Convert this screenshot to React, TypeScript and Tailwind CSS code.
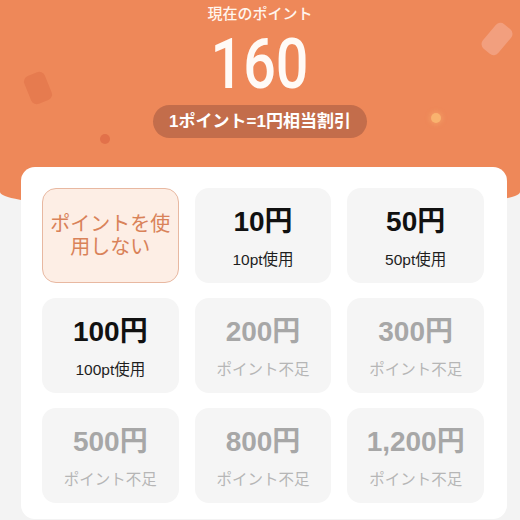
import React from "react";

type Opt = { title: string; sub: string; ok: boolean };

const opts: Opt[] = [
  { title: "10円", sub: "10pt使用", ok: true },
  { title: "50円", sub: "50pt使用", ok: true },
  { title: "100円", sub: "100pt使用", ok: true },
  { title: "200円", sub: "ポイント不足", ok: false },
  { title: "300円", sub: "ポイント不足", ok: false },
  { title: "500円", sub: "ポイント不足", ok: false },
  { title: "800円", sub: "ポイント不足", ok: false },
  { title: "1,200円", sub: "ポイント不足", ok: false },
];

export default function App() {
  return (
    <div
      className="relative h-[520px] w-[520px] overflow-hidden bg-[#f3f3f3]"
      style={{ fontFamily: '"Liberation Sans", "Noto Sans CJK JP", sans-serif' }}
    >
      <div className="relative h-[212px] w-full rounded-b-[50%_20px] bg-[#ee8859]">
        <div className="absolute left-[27px] top-[73px] h-[30px] w-[22px] -rotate-[22deg] rounded-[6px] bg-[#e67b4f]" />
        <div className="absolute left-[487px] top-[23px] h-[32px] w-[20px] rotate-[40deg] rounded-[6px] bg-[#f29f7e]" />
        <div className="absolute left-[100px] top-[134px] h-[10px] w-[10px] rounded-full bg-[#e2714a]" />
        <div className="absolute left-[431px] top-[113px] h-[10px] w-[10px] rounded-full bg-[#f9b36f] shadow-[0_0_4px_2px_rgba(249,179,111,0.35)]" />
        <div className="relative flex flex-col items-center">
          <div className="mt-[3px] h-[21px] text-[15px] font-medium leading-[21px] text-[#fff5ee]">
            現在のポイント
          </div>
          <div
            className="mt-[4px] h-[71px] scale-x-[0.81] text-[71px] font-medium leading-[71px] text-[#fffaf6]"
            style={{ fontFamily: 'Roboto, "Liberation Sans", sans-serif' }}
          >
            160
          </div>
          <div className="mt-[6px] flex h-[33px] items-center rounded-full bg-[#c36d4b] px-[16px] text-[17px] font-bold text-white">
            1ポイント=1円相当割引
          </div>
        </div>
      </div>
      <div className="relative z-10 -mt-[45px] ml-[21px] w-[486px] rounded-[14px] bg-white px-[21px] pb-[16px] pt-[21px]">
        <div className="grid w-[442px] grid-cols-3 gap-x-[16px] gap-y-[15px]">
          <div className="flex h-[95px] flex-col items-center justify-center rounded-[14px] border border-[#e8b8a1] bg-[#fdeee5] text-center text-[20px] leading-[23px] text-[#d98259]">
            <div>ポイントを使</div>
            <div>用しない</div>
          </div>
          {opts.map((o) => (
            <div
              key={o.title}
              className="flex h-[95px] flex-col items-center rounded-[14px] bg-[#f5f5f5] pt-[18px]"
            >
              <div
                className={
                  "h-[32px] text-[28px] font-bold leading-[32px] " +
                  (o.ok ? "text-[#111111]" : "text-[#a7a7a7]")
                }
              >
                {o.title}
              </div>
              <div
                className={
                  "mt-[12px] h-[20px] text-[15.5px] leading-[20px] " +
                  (o.ok ? "text-[#1e1e1e]" : "text-[#b6b6b6]")
                }
              >
                {o.sub}
              </div>
            </div>
          ))}
        </div>
      </div>
    </div>
  );
}
